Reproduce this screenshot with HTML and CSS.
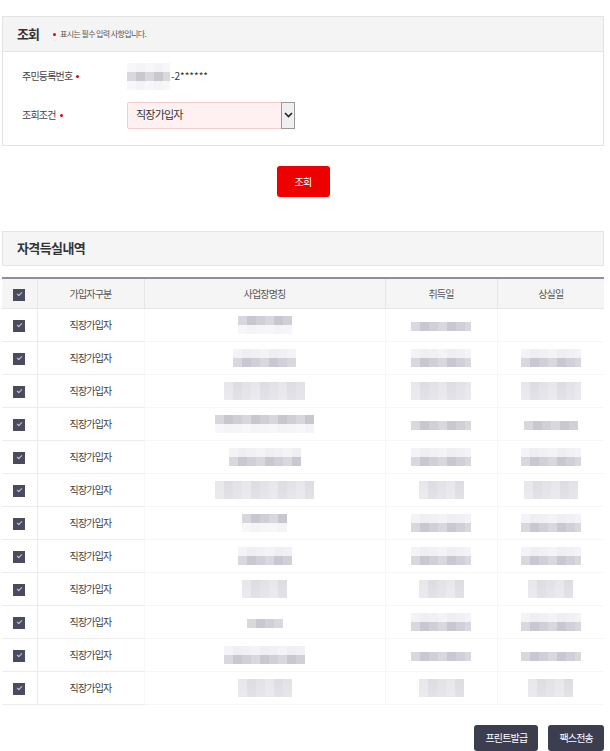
FILE: index.html
```
<!DOCTYPE html>
<html>
<head>
<meta charset="utf-8">
<title>자격득실 조회</title>
<link rel="stylesheet" href="styles.css">
</head>
<body>
<div class="wrap">

  <section class="panel">
    <div class="panel-head">
      <h2>조회</h2>
      <span class="req-note"><i class="dot"></i>표시는 필수 입력 사항입니다.</span>
    </div>
    <div class="panel-body">
      <div class="field">
        <label>주민등록번호<i class="dot"></i></label>
        <div class="value"><span class="mask mask-id"></span>-2******</div>
      </div>
      <div class="field">
        <label>조회조건<i class="dot"></i></label>
        <div class="select">
          <span>직장가입자</span>
          <span class="arrow">
            <svg width="9" height="6" viewBox="0 0 9 6"><path d="M1 1l3.5 3.5L8 1" fill="none" stroke="#222" stroke-width="1.6"/></svg>
          </span>
        </div>
      </div>
    </div>
  </section>

  <div class="search-row">
    <button class="btn-red">조회</button>
  </div>

  <div class="section-title">자격득실내역</div>

  <table class="grid">
    <colgroup>
      <col style="width:35px"><col style="width:107px"><col style="width:241px"><col style="width:112px"><col>
    </colgroup>
    <thead>
      <tr>
        <th><span class="chk"></span></th>
        <th>가입자구분</th>
        <th>사업장명칭</th>
        <th>취득일</th>
        <th>상실일</th>
      </tr>
    </thead>
    <tbody>
      <tr><td><span class="chk"></span></td><td>직장가입자</td><td><span class="mask top" style="width:54px"></span></td><td><span class="mask one" style="width:60px"></span></td><td></td></tr>
      <tr><td><span class="chk"></span></td><td>직장가입자</td><td><span class="mask bot" style="width:63px"></span></td><td><span class="mask bot" style="width:60px"></span></td><td><span class="mask bot" style="width:60px"></span></td></tr>
      <tr><td><span class="chk"></span></td><td>직장가입자</td><td><span class="mask even" style="width:81px"></span></td><td><span class="mask even" style="width:60px"></span></td><td><span class="mask even" style="width:60px"></span></td></tr>
      <tr><td><span class="chk"></span></td><td>직장가입자</td><td><span class="mask top" style="width:99px"></span></td><td><span class="mask one" style="width:60px"></span></td><td><span class="mask one" style="width:54px"></span></td></tr>
      <tr><td><span class="chk"></span></td><td>직장가입자</td><td><span class="mask bot" style="width:72px"></span></td><td><span class="mask bot" style="width:60px"></span></td><td><span class="mask bot" style="width:60px"></span></td></tr>
      <tr><td><span class="chk"></span></td><td>직장가입자</td><td><span class="mask even" style="width:99px"></span></td><td><span class="mask even" style="width:45px"></span></td><td><span class="mask even" style="width:54px"></span></td></tr>
      <tr><td><span class="chk"></span></td><td>직장가입자</td><td><span class="mask top" style="width:45px"></span></td><td><span class="mask bot" style="width:60px"></span></td><td><span class="mask bot" style="width:60px"></span></td></tr>
      <tr><td><span class="chk"></span></td><td>직장가입자</td><td><span class="mask bot" style="width:54px"></span></td><td><span class="mask bot" style="width:60px"></span></td><td><span class="mask bot" style="width:60px"></span></td></tr>
      <tr><td><span class="chk"></span></td><td>직장가입자</td><td><span class="mask even" style="width:45px"></span></td><td><span class="mask even" style="width:45px"></span></td><td><span class="mask even" style="width:45px"></span></td></tr>
      <tr><td><span class="chk"></span></td><td>직장가입자</td><td><span class="mask one" style="width:36px"></span></td><td><span class="mask bot" style="width:60px"></span></td><td><span class="mask bot" style="width:60px"></span></td></tr>
      <tr><td><span class="chk"></span></td><td>직장가입자</td><td><span class="mask bot" style="width:81px"></span></td><td><span class="mask one" style="width:60px"></span></td><td><span class="mask one" style="width:60px"></span></td></tr>
      <tr><td><span class="chk"></span></td><td>직장가입자</td><td><span class="mask even" style="width:54px"></span></td><td><span class="mask even" style="width:45px"></span></td><td><span class="mask even" style="width:45px"></span></td></tr>
    </tbody>
  </table>

  <div class="actions">
    <button class="btn-dark">프린트발급</button>
    <button class="btn-dark">팩스전송</button>
  </div>

</div>
</body>
</html>
```

FILE: styles.css
```
body {
  margin: 0;
  font: 10px/1.4 "Noto Sans CJK KR", "Noto Sans", sans-serif;
  color: #444;
  background: #fff;
  letter-spacing: -0.8px;
}
.wrap {
  width: 602px;
  padding: 16px 0 0 2px;
}

/* search panel */
.panel {
  border: 1px solid #e3e3e3;
}
.panel-head {
  display: flex;
  align-items: center;
  height: 34px;
  padding: 0 14px;
  background: #f4f4f4;
  border-bottom: 1px solid #e6e6e6;
}
.panel-head h2 {
  margin: 0 10px 0 0;
  font-size: 13px;
  font-weight: 700;
  color: #333;
  letter-spacing: -1px;
}
.req-note {
  display: flex;
  align-items: center;
  font-size: 8px;
  color: #555;
  letter-spacing: -0.6px;
}
.dot {
  display: inline-block;
  width: 3px;
  height: 3px;
  border-radius: 50%;
  background: #e60012;
  margin: 0 4px 0 4px;
}
.panel-body {
  display: flex;
  flex-direction: column;
  gap: 11px;
  padding: 10px 19px 16px;
}
.field {
  display: flex;
  align-items: center;
  height: 28px;
}
.field label {
  display: flex;
  align-items: center;
  width: 105px;
  color: #444;
}
.value {
  display: flex;
  align-items: center;
  color: #333;
  letter-spacing: 0;
}
.select {
  display: flex;
  align-items: center;
  justify-content: space-between;
  width: 158px;
  height: 25px;
  border: 1px solid #f4cccc;
  border-radius: 2px;
  background: #fff1f1;
  padding-left: 8px;
  font-size: 11px;
  color: #333;
}
.arrow {
  display: flex;
  align-items: center;
  justify-content: center;
  width: 12px;
  height: 25px;
  border: 1px solid #999;
  background: #efefef;
  margin-right: -1px;
}

/* buttons */
.search-row {
  display: flex;
  justify-content: center;
  margin-top: 20px;
}
button {
  font: inherit;
  letter-spacing: -0.8px;
  border: 0;
  color: #fff;
  cursor: pointer;
}
.btn-red {
  width: 53px;
  height: 31px;
  border-radius: 3px;
  background: #ee0000;
}
.btn-dark {
  height: 26px;
  padding: 0 11px;
  border-radius: 3px;
  background: #3c3e50;
}
.actions {
  display: flex;
  justify-content: flex-end;
  gap: 10px;
  margin-top: 20px;
}

/* result list */
.section-title {
  margin-top: 34px;
  height: 33px;
  display: flex;
  align-items: center;
  padding: 0 14px;
  background: #f5f5f5;
  border: 1px solid #e4e4e4;
  font-size: 13px;
  font-weight: 700;
  color: #333;
  letter-spacing: -0.6px;
}
.grid {
  width: 602px;
  margin-top: 11px;
  border-collapse: collapse;
  table-layout: fixed;
  border-top: 2px solid #8d8f9a;
  border-bottom: 1px solid #d3d7df;
}
.grid th,
.grid td {
  padding: 0;
}
.grid th {
  height: 29px;
  background: #f5f5f5;
  font-weight: 400;
  color: #555;
  border-left: 1px solid #e6e6e6;
  border-bottom: 1px solid #e6e6e6;
}
.grid td {
  height: 32px;
  text-align: center;
  color: #444;
  border-left: 1px solid #ececec;
  border-bottom: 1px solid #ececec;
}
.grid th:first-child,
.grid td:first-child {
  border-left: 0;
}
.grid td:nth-child(n+3) {
  border-left-color: #f7f7f7;
  border-bottom-color: #f7f7f7;
}
.chk {
  display: inline-block;
  vertical-align: middle;
  width: 12px;
  height: 12px;
  background: #4a4b5e;
  position: relative;
}
.chk::after {
  content: "";
  position: absolute;
  left: 4px;
  top: 3px;
  width: 4px;
  height: 2px;
  border-left: 1px solid #c9cad6;
  border-bottom: 1px solid #c9cad6;
  transform: rotate(-45deg);
}

/* pixelated personal data */
.mask {
  display: inline-block;
  vertical-align: middle;
  height: 18px;
  background-image:
    repeating-linear-gradient(90deg, rgba(255,255,255,.35) 0 9px, rgba(255,255,255,0) 9px 18px, rgba(255,255,255,.15) 18px 27px),
    linear-gradient(#cfcdd5 0 50%, #f5f4f7 50%);
}
.mask.top {
  background-image:
    repeating-linear-gradient(90deg, rgba(255,255,255,.3) 0 9px, rgba(255,255,255,0) 9px 18px, rgba(255,255,255,.15) 18px 27px),
    linear-gradient(#c8c6cf 0 50%, #f4f3f6 50%);
}
.mask.bot {
  background-image:
    repeating-linear-gradient(90deg, rgba(255,255,255,.3) 0 9px, rgba(255,255,255,0) 9px 18px, rgba(255,255,255,.15) 18px 27px),
    linear-gradient(#efeef2 0 50%, #c9c7d0 50%);
}
.mask.even {
  background-image:
    repeating-linear-gradient(90deg, rgba(255,255,255,.3) 0 9px, rgba(255,255,255,0) 9px 18px, rgba(255,255,255,.15) 18px 27px),
    linear-gradient(#dddce2, #e3e2e7);
}
.mask.one {
  height: 9px;
  background-image:
    repeating-linear-gradient(90deg, rgba(255,255,255,.3) 0 9px, rgba(255,255,255,0) 9px 18px, rgba(255,255,255,.15) 18px 27px),
    linear-gradient(#c9c7d0, #c9c7d0);
}
.mask-id {
  width: 43px;
  height: 27px;
  margin-right: 1px;
  background-image:
    repeating-linear-gradient(90deg, rgba(255,255,255,.3) 0 9px, rgba(255,255,255,0) 9px 18px),
    linear-gradient(#f4f4f6 0 33%, #c9c8cf 33% 66%, #f4f4f6 66%);
}
```
